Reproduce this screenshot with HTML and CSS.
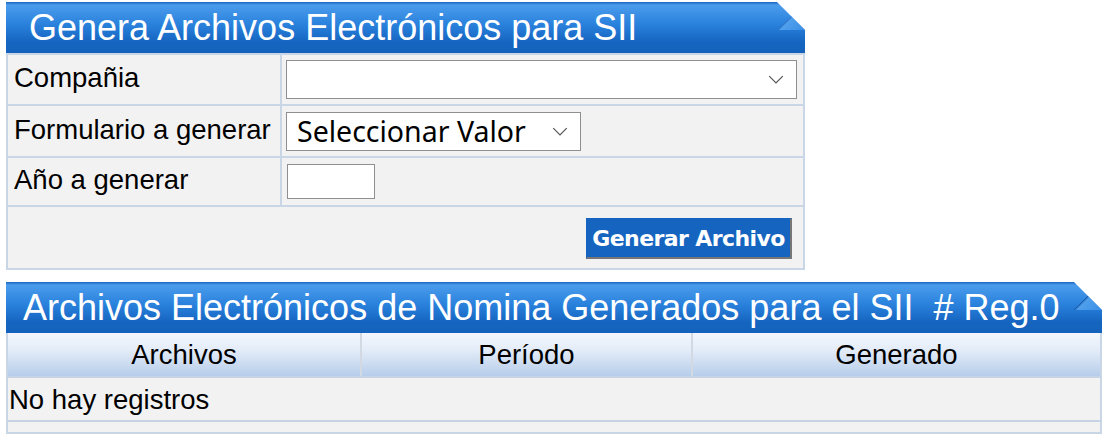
FILE: index.html
```html
<!DOCTYPE html>
<html lang="es">
<head>
<meta charset="utf-8">
<title>Genera Archivos Electrónicos para SII</title>
<link rel="stylesheet" href="styles.css">
</head>
<body>
<section class="panel panel-form">
  <h2 class="panel-title">Genera Archivos Electrónicos para SII</h2>
  <table class="form-table">
    <tr class="row-1">
      <td class="label">Compañia</td>
      <td class="field"><div class="select select-wide"><span></span><svg class="chev" viewBox="0 0 14 8"><path d="M1 1l6 6 6-6" fill="none" stroke="#555" stroke-width="1.1"/></svg></div></td>
    </tr>
    <tr class="row-2">
      <td class="label">Formulario a generar</td>
      <td class="field"><div class="select select-narrow"><span>Seleccionar Valor</span><svg class="chev" viewBox="0 0 14 8"><path d="M1 1l6 6 6-6" fill="none" stroke="#555" stroke-width="1.1"/></svg></div></td>
    </tr>
    <tr class="row-3">
      <td class="label">Año a generar</td>
      <td class="field"><div class="textbox"></div></td>
    </tr>
    <tr class="row-4">
      <td class="actions" colspan="2"><button class="btn" type="button">Generar Archivo</button></td>
    </tr>
  </table>
</section>

<section class="panel panel-list">
  <h2 class="panel-title">Archivos Electrónicos de Nomina Generados para el SII &nbsp;# Reg.0</h2>
  <table class="grid">
    <thead>
      <tr>
        <th class="c1">Archivos</th>
        <th class="c2">Período</th>
        <th class="c3">Generado</th>
      </tr>
    </thead>
    <tbody>
      <tr class="empty"><td colspan="3">No hay registros</td></tr>
      <tr class="foot"><td colspan="3"></td></tr>
    </tbody>
  </table>
</section>
</body>
</html>
```

FILE: styles.css
```css
html, body {
  margin: 0;
  background: #ffffff;
}
body {
  padding: 2px 6px 0 6px;
  font-family: "Liberation Sans", Arial, sans-serif;
  color: #000;
}
.panel {
  position: relative;
}
.panel-form {
  width: 799px;
}
.panel-list {
  width: 1096px;
  margin-top: 12px;
}
.panel-title {
  position: relative;
  margin: 0;
  height: 51px;
  box-sizing: border-box;
  font-weight: normal;
  font-size: 36px;
  line-height: 51px;
  color: #fff;
  white-space: pre;
  background: linear-gradient(to bottom, #1a63c4 0px, #4b9ceb 3px, #2a82dd 22px, #1565c0 40px, #1462bb 100%);
  clip-path: polygon(0 0, calc(100% - 28px) 0, 100% 28px, 100% 100%, 0 100%);
}
.panel-form .panel-title {
  padding-left: 23px;
}
.panel-list .panel-title {
  padding-left: 17px;
}
.panel-title::after {
  content: "";
  position: absolute;
  right: 0;
  top: 0;
  width: 28px;
  height: 28px;
  background: linear-gradient(135deg, transparent 50%, #1b5fb4 50%, #4f9fec 55%, #3a8ee4 100%);
  clip-path: polygon(0 0, 100% 100%, 0 100%);
}

/* form table */
.form-table {
  width: 100%;
  border-collapse: collapse;
  background: #f2f2f2;
  font-size: 27.5px;
  line-height: 31px;
}
.form-table td {
  border: 2px solid #c9d6e6;
  padding: 0;
}
.label {
  width: 268px;
  padding: 0 0 4px 6px !important;
  vertical-align: middle;
  white-space: nowrap;
}
.row-1 td { height: 45px; }
.row-2 td { height: 46px; }
.row-3 td { height: 43px; }
.row-4 td { height: 61px; }
.row-4 td { padding: 0; }
.field {
  padding: 0 6px 0 4px !important;
  vertical-align: middle;
}
.select {
  display: flex;
  align-items: center;
  justify-content: space-between;
  box-sizing: border-box;
  height: 39px;
  background: #fff;
  border: 1px solid #8f8f8f;
  font-family: "Noto Sans", "Open Sans", sans-serif;
  font-size: 28.5px;
  padding: 0 12px 0 10px;
}
.select-wide { width: 511px; }
.select-narrow { width: 295px; }
.select span { line-height: 1; }
.chev {
  width: 16px;
  height: 9px;
  flex: none;
}
.textbox {
  box-sizing: border-box;
  width: 88px;
  height: 35px;
  margin-left: 1px;
  background: #fff;
  border: 1px solid #8f8f8f;
}
.actions {
  text-align: right;
  padding-right: 11px !important;
  vertical-align: middle;
}
.btn {
  box-sizing: border-box;
  width: 206px;
  height: 41px;
  margin-top: 2px;
  border: 1px solid #1565c0;
  border-right: 2px solid #777;
  border-bottom: 2px solid #777;
  background: #1565c0;
  color: #fff;
  font-family: "DejaVu Sans", Verdana, sans-serif;
  font-weight: bold;
  font-size: 22px;
  letter-spacing: -0.6px;
  padding: 0;
  vertical-align: middle;
}

/* list grid */
.grid {
  width: 100%;
  border-collapse: collapse;
  font-size: 27.5px;
  line-height: 31px;
  background: #f2f2f2;
}
.grid th {
  height: 43px;
  font-weight: normal;
  padding: 0;
  text-align: center;
  background: linear-gradient(to bottom, #f4f7fd 0%, #e3ecf8 40%, #b6cdea 100%);
  border-left: 2px solid #d2d9e2;
  border-bottom: 2px solid #c5d3e4;
}
.grid th:first-child { border-left: 2px solid #c9d6e6; }
.grid th:last-child { border-right: 2px solid #c9d6e6; }
.grid .c1 { width: 352px; }
.grid .c2 { width: 329px; }
.empty td {
  height: 42px;
  padding: 0 0 0 1px;
  border-left: 2px solid #c9d6e6;
  border-right: 2px solid #c9d6e6;
  border-bottom: 2px solid #c5d3e4;
}
.foot td {
  height: 10px;
  padding: 0;
  border: 2px solid #c9d6e6;
  border-top: 0;
}
```
